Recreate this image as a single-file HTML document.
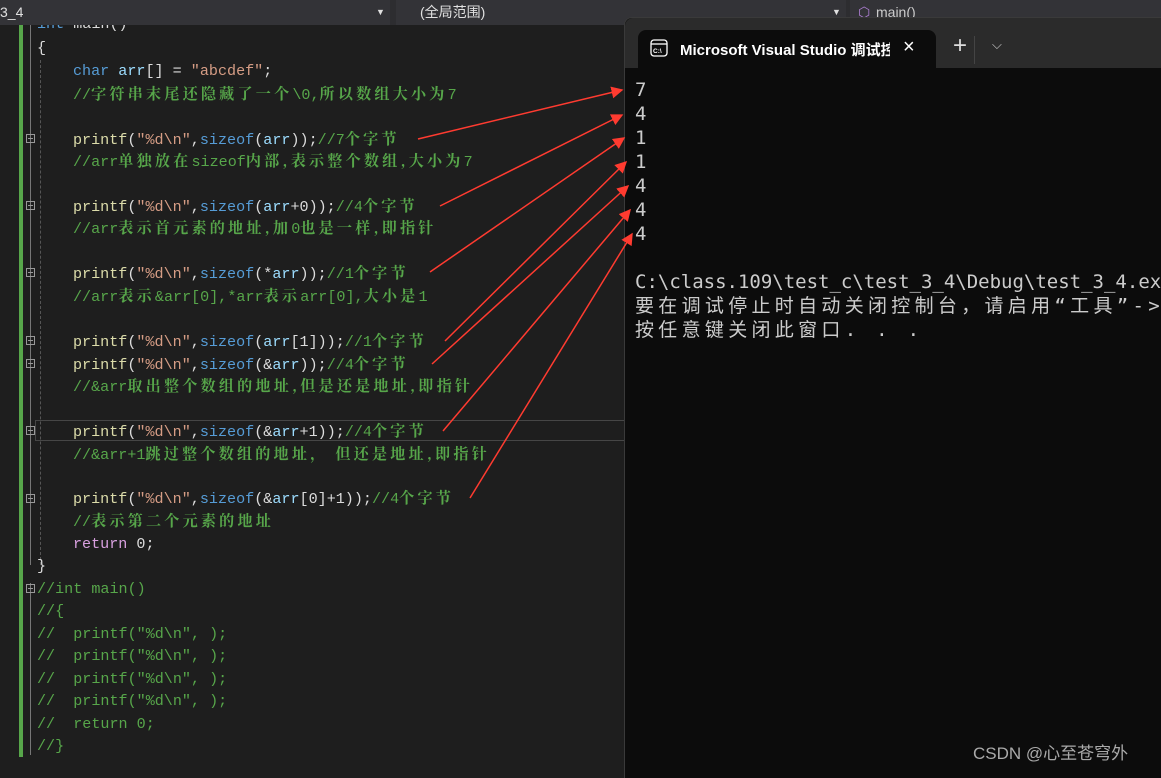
<!DOCTYPE html>
<html><head><meta charset="utf-8"><style>
body{margin:0;width:1161px;height:770px;background:#1e1e1e;overflow:hidden;position:relative;font-family:"Liberation Mono","Noto Serif CJK SC",monospace}
.top{position:absolute;left:0;top:0;width:1161px;height:25px;background:#2d2d30;z-index:5}
.top div{position:absolute;top:0;height:25px;background:#333337;color:#e0e0e0;font:14px "Liberation Sans","Noto Sans CJK SC",sans-serif;line-height:25px}
.gbar{position:absolute;left:19px;top:25px;width:4px;height:732px;background:#57a64a}
.l{position:absolute;font-size:15.1px;line-height:22px;white-space:pre;color:#dcdcdc}
.c{color:#57a64a}.c b{font-weight:bold;letter-spacing:3.2px;font-family:"Noto Serif CJK SC",serif}
.f{color:#dcdcaa}.k{color:#569cd6}.s{color:#d69d85}.v{color:#9cdcfe}.p{color:#b4b4b4}.r{color:#d8a0df}.n{color:#b5cea8}
.fold{position:absolute;left:26px;width:9px;height:9px;border:1px solid #999;box-sizing:border-box}
.fold:after{content:"";position:absolute;left:1px;top:3px;width:5px;height:1px;background:#999}
.con{position:absolute;left:624px;top:17px;width:540px;height:760px;background:#0c0c0c;border-left:1px solid #3a3a3a;border-top:1px solid #3a3a3a;border-radius:8px 0 0 0;z-index:6}
.tabbar{position:absolute;left:0;top:0;right:0;height:50px;background:#2b2b2b;border-radius:8px 0 0 0}
.tab{position:absolute;left:13px;top:12px;width:298px;height:38px;background:#0c0c0c;border-radius:8px 8px 0 0;color:#fff;font:bold 15px "Liberation Sans","Noto Sans CJK SC",sans-serif}
.out{position:absolute;left:10px;color:#cccccc;font-family:"DejaVu Sans Mono","Noto Sans CJK SC",monospace;font-size:19px;line-height:24px;white-space:pre}
</style></head><body>
<div class="top"><div style="left:0;width:390px">3_4<span style="position:absolute;left:376px;font-size:9px">▼</span></div>
<div style="left:396px;width:450px;padding-left:24px;box-sizing:border-box">(全局范围)<span style="position:absolute;left:436px;font-size:9px">▼</span></div>
<div style="left:850px;width:311px;padding-left:26px;box-sizing:border-box;color:#ccc">main()<span style="position:absolute;left:8px;top:0;color:#b180d7">⬡</span></div></div>
<div class="gbar"></div>
<div style="position:absolute;left:40px;top:60px;height:505px;border-left:1px dashed #555"></div>
<div style="position:absolute;left:30px;top:25px;height:540px;border-left:1px solid #777"></div>
<div style="position:absolute;left:30px;top:583px;height:172px;border-left:1px solid #777"></div>
<div class="fold" style="top:134px"></div><div class="fold" style="top:201px"></div><div class="fold" style="top:268px"></div><div class="fold" style="top:336px"></div><div class="fold" style="top:359px"></div><div class="fold" style="top:426px"></div><div class="fold" style="top:494px"></div><div class="fold" style="top:584px"></div>
<div style="position:absolute;left:35px;top:420px;width:600px;height:21px;border:1px solid #464646;box-sizing:border-box"></div>

<div class="l" style="left:37px;top:13px"><span class="k">int</span> main()</div>
<div class="l" style="left:37px;top:37px">{</div>
<div class="l" style="left:73px;top:60px"><span class="k">char</span> <span class="v">arr</span>[] = <span class="s">"abcdef"</span>;</div>
<div class="l c" style="left:73px;top:83px">//<b>字符串末尾还隐藏了一个</b>\0,<b>所以数组大小为</b>7</div>
<div class="l" style="left:73px;top:128px"><span class="f">printf</span>(<span class="s">"%d\n"</span>,<span class="k">sizeof</span>(<span class="v">arr</span>));<span class="c">//7<b>个字节</b></span></div>
<div class="l c" style="left:73px;top:150px">//arr<b>单独放在</b>sizeof<b>内部,表示整个数组,大小为</b>7</div>
<div class="l" style="left:73px;top:195px"><span class="f">printf</span>(<span class="s">"%d\n"</span>,<span class="k">sizeof</span>(<span class="v">arr</span>+0));<span class="c">//4<b>个字节</b></span></div>
<div class="l c" style="left:73px;top:217px">//arr<b>表示首元素的地址,加</b>0<b>也是一样,即指针</b></div>
<div class="l" style="left:73px;top:262px"><span class="f">printf</span>(<span class="s">"%d\n"</span>,<span class="k">sizeof</span>(*<span class="v">arr</span>));<span class="c">//1<b>个字节</b></span></div>
<div class="l c" style="left:73px;top:285px">//arr<b>表示</b>&amp;arr[0],*arr<b>表示</b>arr[0],<b>大小是</b>1</div>
<div class="l" style="left:73px;top:330px"><span class="f">printf</span>(<span class="s">"%d\n"</span>,<span class="k">sizeof</span>(<span class="v">arr</span>[1]));<span class="c">//1<b>个字节</b></span></div>
<div class="l" style="left:73px;top:353px"><span class="f">printf</span>(<span class="s">"%d\n"</span>,<span class="k">sizeof</span>(&amp;<span class="v">arr</span>));<span class="c">//4<b>个字节</b></span></div>
<div class="l c" style="left:73px;top:375px">//&amp;arr<b>取出整个数组的地址,但是还是地址,即指针</b></div>
<div class="l" style="left:73px;top:420px"><span class="f">printf</span>(<span class="s">"%d\n"</span>,<span class="k">sizeof</span>(&amp;<span class="v">arr</span>+1));<span class="c">//4<b>个字节</b></span></div>
<div class="l c" style="left:73px;top:443px">//&amp;arr+1<b>跳过整个数组的地址， 但还是地址,即指针</b></div>
<div class="l" style="left:73px;top:487px"><span class="f">printf</span>(<span class="s">"%d\n"</span>,<span class="k">sizeof</span>(&amp;<span class="v">arr</span>[0]+1));<span class="c">//4<b>个字节</b></span></div>
<div class="l c" style="left:73px;top:510px">//<b>表示第二个元素的地址</b></div>
<div class="l" style="left:73px;top:533px"><span class="r">return</span> 0;</div>
<div class="l" style="left:37px;top:555px">}</div>
<div class="l c" style="left:37px;top:578px">//int main()</div>
<div class="l c" style="left:37px;top:600px">//{</div>
<div class="l c" style="left:37px;top:623px">//  printf("%d\n", );</div>
<div class="l c" style="left:37px;top:645px">//  printf("%d\n", );</div>
<div class="l c" style="left:37px;top:668px">//  printf("%d\n", );</div>
<div class="l c" style="left:37px;top:690px">//  printf("%d\n", );</div>
<div class="l c" style="left:37px;top:713px">//  return 0;</div>
<div class="l c" style="left:37px;top:735px">//}</div>

<div class="con"><div class="tabbar"></div>
<div class="tab"><svg style="position:absolute;left:12px;top:9px" width="18" height="18" viewBox="0 0 18 18"><rect x="1" y="1" width="16" height="16" rx="3" fill="none" stroke="#fff" stroke-width="1.3"/><line x1="1" y1="5" x2="17" y2="5" stroke="#fff" stroke-width="1.3"/><text x="3" y="14" font-size="6.5" fill="#fff" font-family="Liberation Sans">C:\</text></svg><span style="position:absolute;left:42px;top:9px;width:210px;overflow:hidden;white-space:nowrap">Microsoft Visual Studio 调试控</span><span style="position:absolute;left:265px;top:6px;font-size:20px;font-weight:normal">×</span></div>
<div style="position:absolute;left:328px;top:17px;color:#ddd;font:24px 'Liberation Sans';line-height:22px">+</div>
<div style="position:absolute;left:349px;top:18px;width:1px;height:28px;background:#444"></div>
<div style="position:absolute;left:367px;top:20px;color:#ccc;font:13px 'DejaVu Sans'">⌵</div>
<div class="out" style="top:60px">7
4
1
1
4
4
4

C:\class.109\test_c\test_3_4\Debug\test_3_4.exe
<span style="letter-spacing:4.3px">要在调试停止时自动关闭控制台，请启用“工具”-></span>
<span style="letter-spacing:4.3px">按任意键关闭此窗口. . .</span></div></div>
<div style="position:absolute;left:973px;top:739px;color:#aaa;font:17px 'Liberation Sans','Noto Sans CJK SC',sans-serif;z-index:7">CSDN @心至苍穹外</div>

<svg style="position:absolute;left:0;top:0;z-index:8" width="1161" height="770">
<defs><marker id="a" markerWidth="8" markerHeight="8" refX="7" refY="4" orient="auto"><path d="M0,0 L8,4 L0,8 Z" fill="#ff3b30"/></marker></defs>
<g stroke="#ff3b30" stroke-width="1.5" marker-end="url(#a)">
<line x1="418" y1="139" x2="622" y2="90"/>
<line x1="440" y1="206" x2="622" y2="115"/>
<line x1="430" y1="272" x2="624" y2="138"/>
<line x1="445" y1="341" x2="626" y2="162"/>
<line x1="432" y1="364" x2="628" y2="186"/>
<line x1="443" y1="431" x2="630" y2="210"/>
<line x1="470" y1="498" x2="632" y2="234"/>
</g></svg>
</body></html>
